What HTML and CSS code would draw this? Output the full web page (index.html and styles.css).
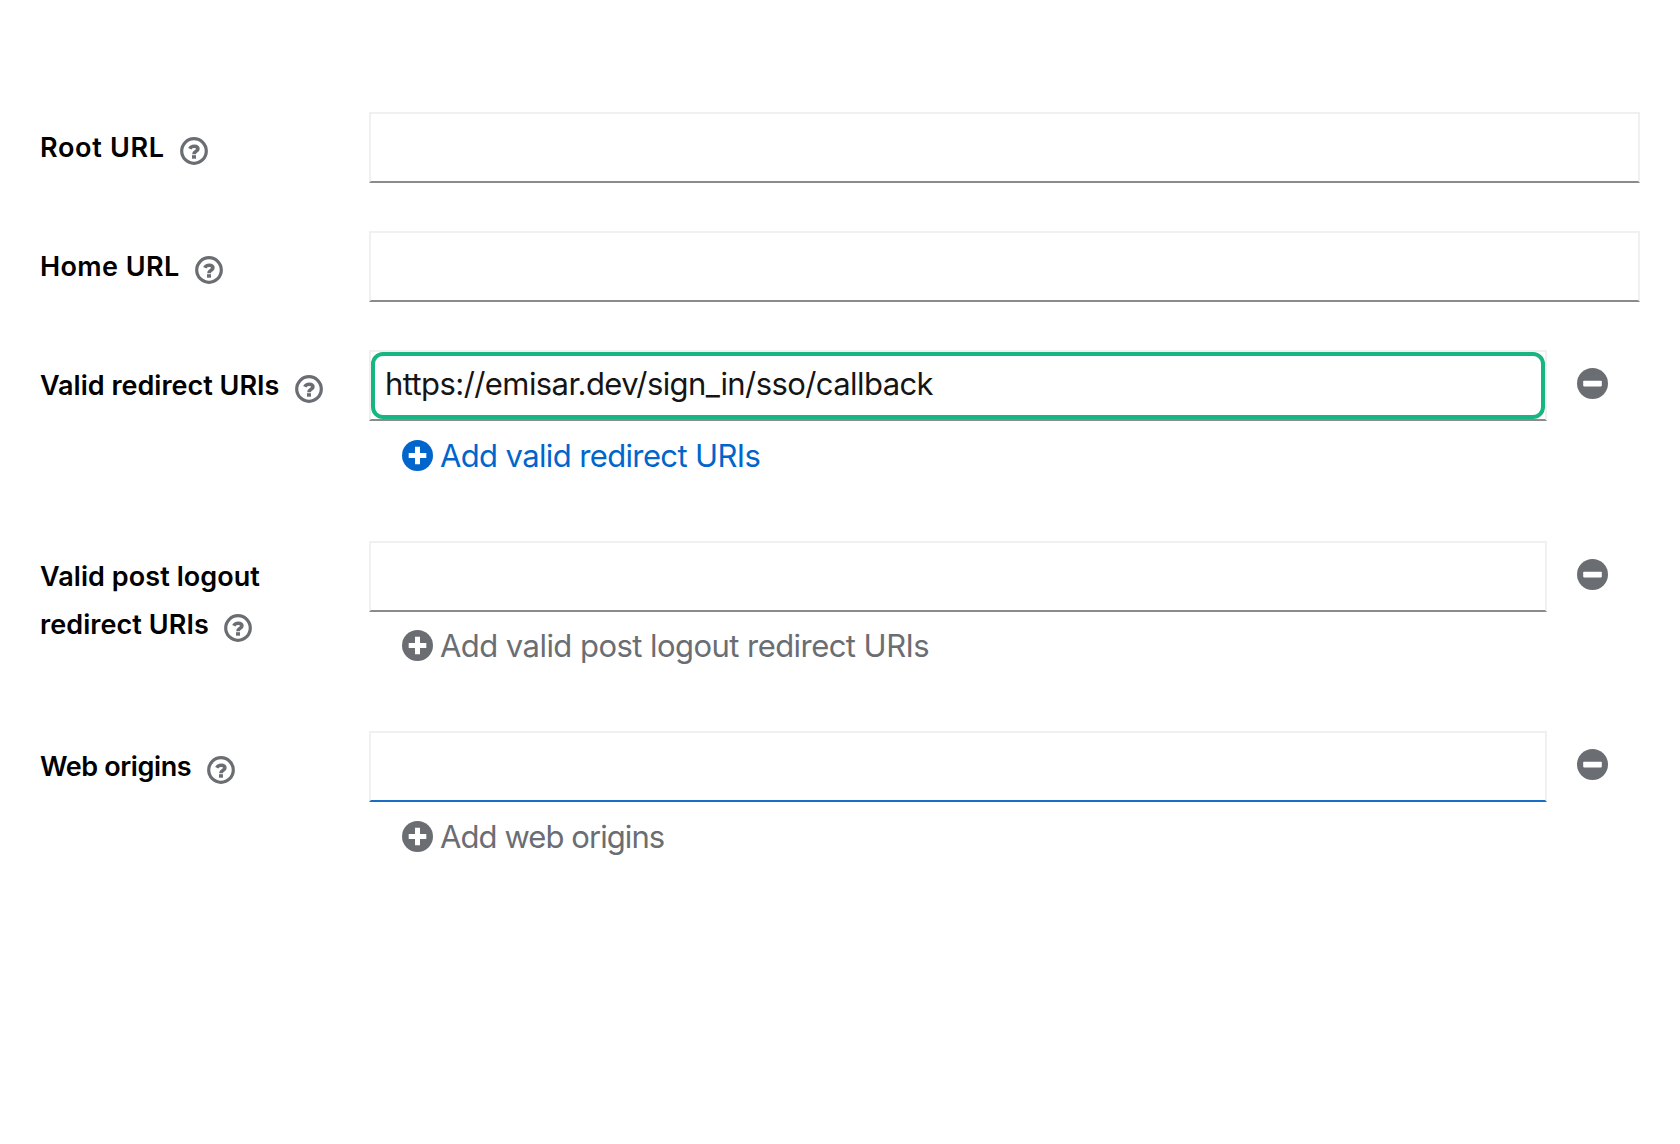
FILE: index.html
```
<!DOCTYPE html>
<html lang="en">
<head>
    <meta charset="UTF-8">
    <meta name="viewport" content="width=device-width, initial-scale=1.0">
    <title>Access settings</title>
    <link rel="stylesheet" href="styles.css">
</head>
<body>
    <!-- shared icons -->
    <svg class="sprite" width="0" height="0">
        <symbol id="help" viewBox="0 0 28 28">
            <circle cx="14" cy="14" r="12.3" fill="none" stroke="currentColor" stroke-width="3.2"/>
            <path d="M9.8 11.7C10.6 10 12 9.2 14.2 9.2C16.4 9.2 17.9 10.2 17.9 12C17.9 14.5 14 14.2 14 17.2" fill="none" stroke="currentColor" stroke-width="3.6"/>
            <path d="M12 18.2h4v3.5h-4z" fill="currentColor"/>
        </symbol>
        <symbol id="plus" viewBox="0 0 31 31">
            <circle cx="15.5" cy="15.5" r="15.5" fill="currentColor"/>
            <path d="M6.7 15.5h17.6M15.5 6.7v17.6" stroke="#fff" stroke-width="5"/>
        </symbol>
        <symbol id="minus" viewBox="0 0 31 31">
            <circle cx="15.5" cy="15.5" r="15.5" fill="currentColor"/>
            <rect x="6.2" y="12.8" width="18.6" height="5.6" rx="0.8" fill="#fff"/>
        </symbol>
    </svg>

    <form class="settings">
        <div class="form-group">
            <label for="rootUrl"><span class="t-root">Root URL</span><svg class="help"><use href="#help"/></svg></label>
            <div class="control">
                <input type="text" id="rootUrl">
            </div>
        </div>

        <div class="form-group">
            <label for="homeUrl"><span class="t-home">Home URL</span><svg class="help"><use href="#help"/></svg></label>
            <div class="control">
                <input type="text" id="homeUrl">
            </div>
        </div>

        <div class="form-group multi">
            <label for="redirectUris"><span class="t-redirect">Valid redirect URIs</span><svg class="help"><use href="#help"/></svg></label>
            <div class="control">
                <div class="line">
                    <div class="field highlight">
                        <input type="text" id="redirectUris" value="https://emisar.dev/sign_in/sso/callback" spellcheck="false">
                    </div>
                    <button type="button" class="remove" aria-label="Remove"><svg><use href="#minus"/></svg></button>
                </div>
                <button type="button" class="add active"><svg><use href="#plus"/></svg><span class="t-add-redirect">Add valid redirect URIs</span></button>
            </div>
        </div>

        <div class="form-group multi">
            <label for="logoutUris"><span class="t-post">Valid post logout</span><br><span class="t-post">redirect URIs</span><svg class="help"><use href="#help"/></svg></label>
            <div class="control">
                <div class="line">
                    <div class="field">
                        <input type="text" id="logoutUris">
                    </div>
                    <button type="button" class="remove" aria-label="Remove"><svg><use href="#minus"/></svg></button>
                </div>
                <button type="button" class="add"><svg><use href="#plus"/></svg><span class="t-add-post">Add valid post logout redirect URIs</span></button>
            </div>
        </div>

        <div class="form-group multi">
            <label for="webOrigins"><span class="t-web">Web origins</span><svg class="help"><use href="#help"/></svg></label>
            <div class="control">
                <div class="line">
                    <div class="field">
                        <input type="text" id="webOrigins" class="current">
                    </div>
                    <button type="button" class="remove" aria-label="Remove"><svg><use href="#minus"/></svg></button>
                </div>
                <button type="button" class="add"><svg><use href="#plus"/></svg><span class="t-add-web">Add web origins</span></button>
            </div>
        </div>
    </form>
</body>
</html>
```
FILE: styles.css
```
* {
  margin: 0;
  padding: 0;
  box-sizing: border-box;
}

body {
  font-family: Inter, "Open Sans", sans-serif;
  background-color: #fff;
  color: #000;
}

.sprite {
  display: block;
}

.settings {
  padding: 112px 40px 0;
}

.form-group {
  display: grid;
  grid-template-columns: 329px 1fr;
  height: 119px;
}

.form-group.multi {
  height: 190.5px;
}

label {
  padding-top: 12px;
  font-size: 27px;
  font-weight: 600;
  line-height: 48px;
  white-space: nowrap;
}

.help {
  width: 28px;
  height: 28px;
  margin-left: 15.5px;
  color: #6a6e73;
  vertical-align: -8px;
}

/* tracking per label */
.t-root {
  letter-spacing: 0.7px;
}

.t-home {
  letter-spacing: 0.4px;
}

.t-post {
  letter-spacing: 0.07px;
}

.t-web {
  letter-spacing: -0.4px;
}

.t-add-redirect {
  letter-spacing: -0.63px;
}

.t-add-post {
  letter-spacing: -0.55px;
}

.t-add-web {
  letter-spacing: -0.92px;
}

input {
  display: block;
  width: 100%;
  height: 71px;
  padding: 0 14px 4px;
  border: 2px solid #f0f0f0;
  border-bottom-color: #8a8b8e;
  background-color: #fff;
  color: #151515;
  font-family: inherit;
  font-size: 31px;
  letter-spacing: -0.58px;
  font-variant-ligatures: none;
  outline: none;
}

input.current {
  border-bottom-color: #1a6fc4;
}

.line {
  display: flex;
  align-items: center;
}

.field {
  position: relative;
  width: 1178px;
}

/* green frame drawn over the field */
.highlight::after {
  content: "";
  position: absolute;
  inset: 2px 2px 2px 2px;
  border: 4px solid #17b581;
  border-radius: 12px;
  pointer-events: none;
}

button {
  border: none;
  background: none;
  color: #6a6e73;
  font-family: inherit;
}

button svg {
  display: block;
  width: 31px;
  height: 31px;
}

.remove {
  margin-left: 30px;
  padding-bottom: 4px;
}

.add {
  display: flex;
  align-items: center;
  gap: 7px;
  height: 40px;
  margin: 14px 0 0 33px;
  font-size: 31px;
  white-space: nowrap;
}

.add.active {
  color: #06c;
}
```
